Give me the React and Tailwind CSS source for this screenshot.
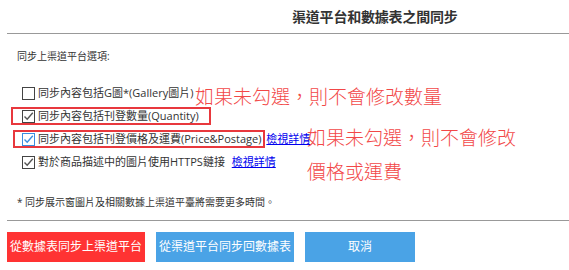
import React from "react";

const Box = ({ checked, focus }) => (
  <span
    className={`w-[13px] h-[13px] shrink-0 border bg-white flex items-center justify-center ${
      focus ? "border-[#3b8ee0]" : "border-[#444]"
    }`}
  >
    {checked && (
      <svg width="11" height="11" viewBox="0 0 11 11">
        <path
          d="M1.5 5.5 L4.2 8.2 L9.8 1.8"
          fill="none"
          stroke={focus ? "#3b8ee0" : "#555"}
          strokeWidth="1.4"
        />
      </svg>
    )}
  </span>
);

const Row = ({ checked, focus, children }) => (
  <div className="h-[23px] flex items-center pl-[22px] gap-[3px] text-[11px] text-[#333]">
    <Box checked={checked} focus={focus} />
    <span className="whitespace-nowrap">{children}</span>
  </div>
);

export default function App() {
  return (
    <div
      className="w-[569px] h-[270px] bg-white relative overflow-hidden text-[#333]"
      style={{ fontFamily: '"Open Sans", "Noto Sans CJK TC", sans-serif' }}
    >
      {/* header */}
      <div className="ml-[7px] h-[34px] border-b border-[#999] flex items-center pl-[285px]">
        <h1 className="text-[14px] font-bold leading-none tracking-[-0.2px]">渠道平台和數據表之間同步</h1>
      </div>

      <div className="pl-[17px] mt-[14px] text-[10px] leading-[16px]">同步上渠道平台選項:</div>

      <div className="mt-[18px]">
        <Row>同步內容包括G圖*(Gallery圖片)</Row>
        <Row checked>同步內容包括刊登數量(Quantity)</Row>
        <Row checked focus>
          同步內容包括刊登價格及運費(Price&Postage){" "}
          <a href="#" className="text-[#0000ee] underline ml-[2px]">檢視詳情</a>
        </Row>
        <Row checked>
          對於商品描述中的圖片使用HTTPS鏈接{" "}
          <a href="#" className="text-[#0000ee] underline ml-[4px]">檢視詳情</a>
        </Row>
      </div>

      <div className="pl-[17px] mt-[20px] text-[10px] leading-[16px]">* 同步展示窗圖片及相關數據上渠道平臺將需要更多時間。</div>

      <div className="ml-[7px] mt-[10px] border-t border-[#999]" />

      <div className="flex gap-[11px] pl-[7px] mt-[11px] text-[12px] text-white">
        <button className="w-[138px] h-[30px] bg-[#ff3333]">從數據表同步上渠道平台</button>
        <button className="w-[138px] h-[30px] bg-[#4aa3e6]">從渠道平台同步回數據表</button>
        <button className="w-[110px] h-[30px] bg-[#4aa3e6]">取消</button>
      </div>

      {/* annotations */}
      <div className="absolute left-[11px] top-[107px] w-[200px] h-[18px] border-2 border-[#e8383d]" />
      <div className="absolute left-[13px] top-[130px] w-[252px] h-[18px] border-2 border-[#e8383d]" />
      <div className="absolute left-[195px] top-[84px] text-[19px] font-light leading-[26px] text-[#f24848] whitespace-nowrap">
        如果未勾選，則不會修改數量
      </div>
      <div className="absolute left-[307px] top-[121px] text-[19px] font-light leading-[34px] text-[#f24848] whitespace-nowrap">
        如果未勾選，則不會修改
        <br />
        價格或運費
      </div>
    </div>
  );
}
